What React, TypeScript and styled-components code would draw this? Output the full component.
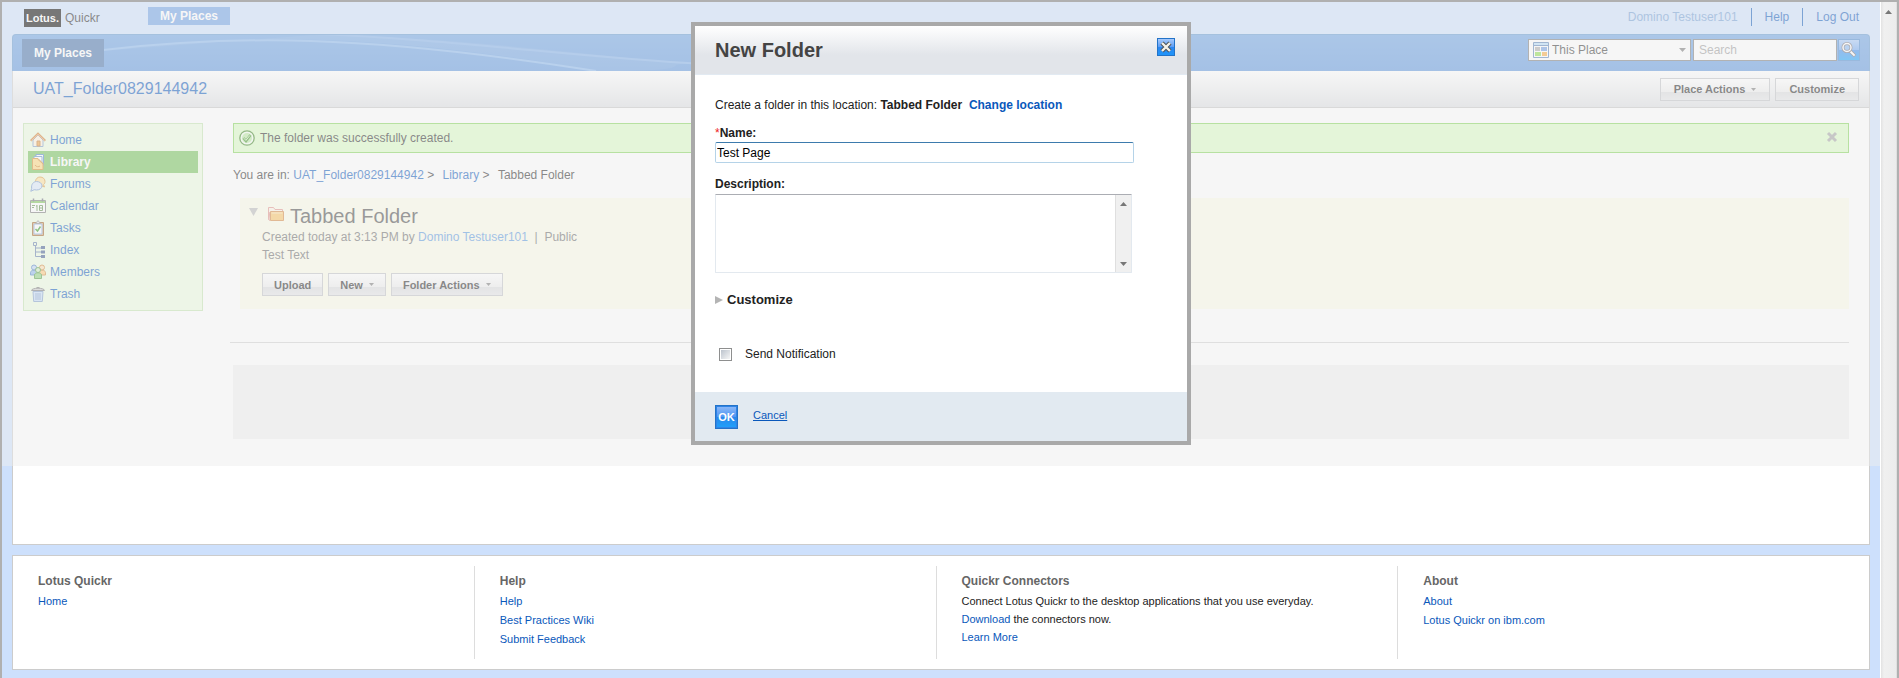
import React, { useState } from 'react';
import styled, { createGlobalStyle, css } from 'styled-components';

const GlobalStyle = createGlobalStyle`
  *, *::before, *::after { box-sizing: border-box; }
  body {
    margin: 0;
    background: #cde0fc;
    color: #222222;
    font: 12px/18px "Liberation Sans", Arial, Helvetica, sans-serif;
  }
  button, input, select, textarea { font: inherit; color: inherit; margin: 0; }
  a { color: #0a58bb; text-decoration: none; }
  h1, h2, h3, p, ul, ol { margin: 0; padding: 0; font-weight: normal; }
  ul, ol { list-style: none; }
`;

/* ---------- window frame ---------- */

const Frame = styled.div`
  display: flex;
  min-height: 100vh;
  border: 2px solid #b0b0b0;
  border-bottom: 0;
`;

const Page = styled.div`
  position: relative;
  flex: 1;
  min-width: 0;
  padding: 0 10px 8px;
`;

const ScrollTrack = styled.div`
  width: 17px;
  padding-top: 8px;
  display: flex;
  justify-content: center;
  align-items: flex-start;
  border-left: 1px solid #ffffff;
  border-right: 1px solid #e0e0e0;
  background: linear-gradient(to right, #e2e2e2, #f0f0f0 3px, #ececec);
`;

const Scrim = styled.div`
  position: absolute;
  top: 0;
  left: 0;
  right: 0;
  height: 464px;
  background: rgba(238, 238, 238, 0.5);
`;

/* ---------- banner ---------- */

const Banner = styled.header`
  display: flex;
  align-items: center;
  height: 32px;
  padding: 0 11px 2px 12px;
`;

const Logo = styled.div`
  display: flex;
  align-items: center;
  width: 124px;
  margin-top: 2px;
  color: #222222;
`;

const LogoMark = styled.span`
  width: 37px;
  margin-right: 4px;
  line-height: 18px;
  background: #000000;
  color: #ffffff;
  font-weight: bold;
  font-size: 11px;
  text-align: center;
`;

const PlacesLink = styled.a`
  padding: 0 12px;
  margin-bottom: 2px;
  background: #6a9ee4;
  color: #ffffff;
  font-weight: bold;
`;

const UserLinks = styled.ul`
  display: flex;
  margin-left: auto;
`;

const UserLink = styled.li<{ $muted?: boolean }>`
  padding: 0 13px;
  border-left: ${p => (p.$muted ? '0' : '1px solid #0a58bb')};
  &:last-child { padding-right: 0; }
  a { color: ${p => (p.$muted ? '#6c9bd3' : '#0a58bb')}; }
`;

/* ---------- place header ---------- */

const PlaceHeader = styled.div`
  display: grid;
  align-items: center;
  height: 37px;
  border: 1px solid #5c94cf;
  border-bottom: 0;
  border-radius: 4px 4px 0 0;
  background: linear-gradient(#69a0e2, #5b94dd);
  overflow: hidden;
  > * { grid-area: 1 / 1; }
`;

const Wave = styled.svg`
  width: 100%;
  height: 36px;
`;

const HeaderRow = styled.div`
  display: flex;
  align-items: flex-start;
  height: 28px;
  padding: 0 9px;
  z-index: 0;
`;

const Tab = styled.a`
  padding: 0 12px;
  line-height: 28px;
  background: #426fa9;
  color: #ffffff;
  font-weight: bold;
`;

const SearchBar = styled.form`
  display: flex;
  align-items: flex-start;
  margin-left: auto;
`;

const ScopeBox = styled.label`
  display: flex;
  align-items: center;
  width: 163px;
  height: 22px;
  margin-right: 2px;
  padding: 0 4px;
  border: 1px solid #777777;
  background: #ffffff;
  color: #333333;
  svg { flex: none; }
`;

const ScopeSelect = styled.select`
  flex: 1;
  height: 20px;
  padding: 0 3px;
  border: 0;
  background: transparent;
  appearance: none;
  outline: none;
`;

const SearchInput = styled.input`
  width: 144px;
  height: 22px;
  padding: 0 5px;
  border: 1px solid #777777;
  border-radius: 0;
  background: #ffffff;
  &::placeholder { color: #999999; opacity: 1; }
`;

const SearchButton = styled.button`
  display: flex;
  align-items: center;
  justify-content: center;
  width: 22px;
  height: 22px;
  margin-left: 1px;
  padding: 0;
  border: 1px solid #4484cc;
  background: linear-gradient(#a4c7f7, #6ea6f2 50%, #3c88ea 50%, #149ffa);
  svg { flex: none; }
`;

/* ---------- workspace ---------- */

const Panel = styled.section`
  border: 1px solid #cccccc;
  background: #ffffff;
`;

const Workspace = styled(Panel)`
  min-height: 474px;
  border-top: 0;
`;

const TitleBar = styled.div`
  display: flex;
  align-items: center;
  justify-content: space-between;
  height: 37px;
  padding: 0 10px 0 20px;
  border-bottom: 1px solid #c4c4c4;
  background: linear-gradient(#ffffff, #dcdee1);
`;

const PlaceName = styled.h1`
  font-size: 16px;
  line-height: 20px;
`;

const ButtonRow = styled.div`
  display: flex;
  gap: 5px;
`;

const ActionButton = styled.button<{ $wide?: boolean }>`
  display: flex;
  align-items: center;
  gap: 6px;
  height: 23px;
  padding: 0 ${p => (p.$wide ? 13 : 11)}px;
  border: 1px solid #bfc1c5;
  background: linear-gradient(#ffffff, #eeeeee 60%, #d8d9db 60%, #e4e5e7);
  color: #222222;
  font-weight: bold;
  font-size: 11px;
  line-height: 20px;
`;

const Columns = styled.div`
  display: flex;
  align-items: flex-start;
  padding: 15px 20px 0 10px;
`;

const SideNav = styled.nav`
  width: 180px;
  margin-right: 27px;
  padding: 5px 4px;
  border: 1px solid #c3e4ae;
  background: #ecfce0;
`;

const NavLink = styled.a<{ $active?: boolean }>`
  display: flex;
  align-items: center;
  gap: 4px;
  height: 22px;
  padding: 0 2px;
  ${p => p.$active && css`
    background: #70c054;
    color: #ffffff;
    font-weight: bold;
  `}
  svg { flex: none; }
`;

const Main = styled.main`
  flex: 1;
  min-width: 0;
`;

const Message = styled.div`
  display: flex;
  align-items: center;
  height: 30px;
  margin-left: 3px;
  padding: 0 10px 0 5px;
  gap: 5px;
  border: 1px solid #80d554;
  background: #dafcc4;
`;

const Dismiss = styled.button`
  display: flex;
  margin-left: auto;
  padding: 0 0 2px;
  border: 0;
  background: none;
`;

const Crumbs = styled.ol`
  display: flex;
  gap: 5px;
  margin: 13px 0 14px 3px;
`;

const FolderCard = styled.article`
  display: grid;
  grid-template-columns: 19px 22px 1fr;
  min-height: 111px;
  margin-left: 10px;
  padding: 8px 9px 13px;
  background: #fcfce8;
`;

const Twisty = styled.button`
  display: flex;
  align-items: flex-start;
  padding: 2px 0 0;
  border: 0;
  background: none;
`;

const FolderName = styled.h2`
  margin-bottom: 2px;
  color: #444444;
  font-size: 20px;
  line-height: 20px;
`;

const FolderInfo = styled.div`
  grid-column: 1 / -1;
  padding-left: 13px;
  color: #666666;
  a { color: #5594dd; }
`;

const FolderButtons = styled(ButtonRow)`
  padding-top: 9px;
`;

const Rule = styled.hr`
  margin: 33px 0 22px;
  border: 0;
  border-top: 1px solid #d0d0d0;
`;

const EmptyArea = styled.div`
  height: 74px;
  margin-left: 3px;
  background: #f0f0f0;
`;

/* ---------- footer ---------- */

const Footer = styled(Panel).attrs({ as: 'footer' })`
  display: grid;
  grid-template-columns: repeat(4, 1fr);
  margin-top: 10px;
  padding: 10px 9px 10px 0;
`;

const FooterColumn = styled.div`
  min-height: 93px;
  padding: 6px 25px;
  border-right: 1px solid #dddddd;
  font-size: 11px;
  &:last-child { border-right: 0; }
`;

const FooterHeading = styled.h3`
  margin-bottom: 2px;
  color: #666666;
  font-weight: bold;
  font-size: 12px;
`;

const FooterLine = styled.p<{ $tight?: boolean }>`
  line-height: ${p => (p.$tight ? '18px' : '19px')};
`;

/* ---------- dialog ---------- */

const DialogLayer = styled.div`
  position: absolute;
  top: 20px;
  left: 0;
  right: 0;
  display: flex;
  justify-content: center;
`;

const Dialog = styled.div`
  width: 500px;
  border: 4px solid #a9a9a9;
  background: #ffffff;
`;

const DialogHeader = styled.div`
  display: flex;
  justify-content: space-between;
  align-items: flex-start;
  height: 49px;
  padding: 12px 12px 0 20px;
  border-bottom: 1px solid #e2eaf2;
  background: linear-gradient(#ffffff, #e2e5ea 60%, #e2e5ea);
`;

const DialogTitle = styled.h2`
  color: #444444;
  font-weight: bold;
  font-size: 20px;
  line-height: 24px;
`;

const CloseButton = styled.button`
  display: flex;
  align-items: center;
  justify-content: center;
  width: 18px;
  height: 18px;
  padding: 0;
  border: 1px solid #2373c8;
  background: linear-gradient(#a7c9fb, #5b9cf5 50%, #2d86ee 50%, #1f95fa);
`;

const DialogBody = styled.form`
  height: 317px;
  padding: 21px 44px 0 20px;
`;

const Location = styled.p`
  margin-bottom: 10px;
`;

const FieldLabel = styled.label`
  display: block;
  font-weight: bold;
`;

const Required = styled.span`
  color: #ee2222;
  font-weight: normal;
`;

const NameInput = styled.input`
  display: block;
  width: 419px;
  height: 21px;
  margin-bottom: 12px;
  padding: 0 1px;
  border: 1px solid #b5d3e8;
  border-top-color: #3d7bad;
  border-radius: 2px;
  color: #000000;
  outline: none;
`;

const TextBox = styled.div`
  display: flex;
  width: 417px;
  height: 79px;
  margin-top: 1px;
  border: 1px solid #e3e9ef;
  border-top-color: #abadb3;
  border-radius: 1px;
`;

const TextArea = styled.textarea`
  flex: 1;
  padding: 2px;
  border: 0;
  outline: none;
  resize: none;
`;

const TextScroll = styled.div`
  display: flex;
  flex-direction: column;
  align-items: center;
  justify-content: space-between;
  width: 16px;
  padding: 7px 0 6px;
  border-left: 1px solid #dfdfdf;
  background: #f0f0f0;
`;

const Disclosure = styled.button`
  display: flex;
  align-items: center;
  gap: 4px;
  margin: 18px 0 36px;
  padding: 0;
  border: 0;
  background: none;
  font-weight: bold;
  font-size: 13px;
  line-height: 18px;
`;

const CheckLabel = styled.label`
  display: flex;
  align-items: center;
  gap: 13px;
  padding-left: 4px;
`;

const CheckBox = styled.input`
  width: 13px;
  height: 13px;
  padding: 1px;
  border: 1px solid #8e8f8f;
  background: linear-gradient(135deg, #bcc3cd, #f6f6f6) content-box;
  appearance: none;
`;

const DialogFooter = styled.div`
  display: flex;
  align-items: center;
  gap: 15px;
  height: 49px;
  padding: 0 20px;
  background: #e2eaf1;
  font-size: 11px;
  a { text-decoration: underline; padding-bottom: 3px; }
`;

const OkButton = styled.button`
  width: 23px;
  height: 24px;
  padding: 0;
  border: 1px solid #2373c8;
  background: linear-gradient(#8fbaf8, #4f96f2 50%, #2a86ea 50%, #1ea2fb);
  box-shadow: inset 0 0 0 1px #2f84e6;
  color: #ffffff;
  font-weight: bold;
`;

/* ---------- drawings ---------- */

const Arrow = ({ w = 5, h = 3, dir = 'down', color = '#777' }: { w?: number; h?: number; dir?: string; color?: string }) => (
  <svg width={w} height={h} viewBox="0 0 10 10" preserveAspectRatio="none" aria-hidden="true">
    <path fill={color} d={dir === 'down' ? 'M0 0h10L5 10z' : dir === 'up' ? 'M0 10h10L5 0z' : 'M0 0v10L10 5z'} />
  </svg>
);

const Icon = ({ children }: { children: React.ReactNode }) => (
  <svg width="16" height="16" viewBox="0 0 16 16" fill="none" aria-hidden="true">{children}</svg>
);

const icons: Record<string, React.ReactNode> = {
  Home: <Icon><path d="M3 8v6.500h10V8L8 3z" fill="#fff3dc" stroke="#7d9cc4" /><path d="M7 9h3v5H7z" fill="#f0a03c" stroke="#c47a2c" /><path d="M.7 8.700 8 1.600l7.300 7.100" stroke="#d07828" strokeWidth="2" /><path d="M1.500 8.500 8 2.300l6.500 6.200" stroke="#ffc98c" strokeWidth=".7" /></Icon>,
  Library: <Icon><path d="M6 .5h7.500v11H6z" fill="#fff" stroke="#4c82c4" /><path d="M4 2.500h8v11H4z" fill="#fff" stroke="#5c8cc8" /><path d="M2.500 4.500h5.500l5 5v6H2.500z" fill="#ffd67a" stroke="#d28a28" /><path d="M7.500 5l5.500 5M5 11c1 2 4 2 5 1" stroke="#d28a28" /></Icon>,
  Forums: <Icon><path d="M10 1c3 0 5 2 5 4.500 0 1.500-.6 2.500-1.500 3.200l1 2.300-3-1.200C8 10 5.500 8 5.500 5.500S7.500 1 10 1z" fill="#ffe09a" stroke="#dc9a3c" /><path d="M6.500 5.500c3 0 5.500 1.800 5.500 4.300s-2.500 4.200-5.500 4.200c-.8 0-1.600-.1-2.300-.3L.8 15.300l.9-3C.9 8.500 3.500 5.500 6.500 5.500z" fill="#dbe8fa" stroke="#6f95cc" /></Icon>,
  Calendar: <Icon><path d="M.5 2.500h15v12H.5z" fill="#fff" stroke="#777" /><path d="M1 3h14v2H1z" fill="#7cc455" /><path d="M3.500.5v3M12.500.5v3" stroke="#667" strokeWidth="1.500" /><path d="M2 7.500h3M2 9.500h2M7 7v6M6 8h1M9.500 7.500h3v5h-3zM9.500 10h3" stroke="#5a8a44" /></Icon>,
  Tasks: <Icon><path d="M2.500 2.500h11v13h-11z" fill="#e0a868" stroke="#9c5e20" /><path d="M4 4h8v10H4z" fill="#fff" stroke="#7aa2dc" /><path d="M5.500 3.500 8 .6l2.500 2.900z" fill="#ddd" stroke="#888" /><path d="m5.500 9 2 2 3-4.500" stroke="#2f9a1c" strokeWidth="1.500" /></Icon>,
  Index: <Icon><path d="M3.500.5h3v3h-3zM5.500 4v10.500H12M5.500 10H12M5.500 6h6" stroke="#5f7aa8" /><path d="M11 4h4v3h-4zM11 8.500h4v3h-4zM11 13h4v3h-4z" fill="#3d568c" /></Icon>,
  Members: <Icon><circle cx="4" cy="3.500" r="2.500" fill="#bcd6f6" stroke="#4c80c4" /><path d="M.5 11V8.500c0-3 7-3 7 0V11z" fill="#8ab4ea" stroke="#4c80c4" /><circle cx="12" cy="3.500" r="2.500" fill="#ffe0b0" stroke="#d08a3c" /><path d="M8.500 11V8.500c0-3 7-3 7 0V11z" fill="#ffc878" stroke="#d08a3c" /><circle cx="8" cy="6" r="2.500" fill="#d4f0c4" stroke="#4c9a3c" /><path d="M4.500 14.500V11c0-3 7-3 7 0v3.500z" fill="#8cd07c" stroke="#4c9a3c" /></Icon>,
  Trash: <Icon><path d="M3 5.500h10l-.7 10H3.700z" fill="#c4dcf8" stroke="#7c9cc8" /><path d="M6 7v7M8 7v7M10 7v7" stroke="#7c9cc8" /><path d="M1.500 4.500c0-3 13-3 13 0z" fill="#ccc" stroke="#777" /><path d="M6.500 1.500h3" stroke="#777" /></Icon>,
};

const SuccessIcon = () => (
  <Icon><circle cx="8" cy="8" r="7.200" fill="#f4fff0" stroke="#3c8420" strokeWidth="1.300" /><circle cx="8" cy="8" r="5" fill="#b8e8a0" /><path d="m4.500 8 2.500 3 4.500-6" stroke="#3c9020" strokeWidth="2.600" /><path d="m4.900 8.200 2 2.200 4-5" stroke="#d8f8c8" strokeWidth="1" /></Icon>
);

const FolderIcon = () => (
  <Icon><path d="M.5 13.500v-12h5l1.500 2h7.500v3" fill="#fff4e4" stroke="#e09088" /><path d="M.5 13.500l1.500 1V6z" fill="#fff4e4" stroke="#e09088" /><path d="M2.500 5.500h13v9h-13z" fill="#fbc260" stroke="#d4843c" /><path d="M3.500 7h11" stroke="#ffe4b0" /></Icon>
);

const PlaceIcon = () => (
  <Icon><path d="M.5.5h15v15H.5z" fill="#fff" stroke="#557fb4" /><path d="M1 1h14v2H1z" fill="#b4dcfa" /><path d="M1 3.500h14" stroke="#557fb4" /><path d="M2 5h5v4H2z" fill="#aaa" /><path d="M8 5h6v4H8z" fill="#6c9be0" /><path d="M2 10h6v4H2z" fill="#8cdc4c" /><path d="M9 10h5v4H9z" fill="#f8a83c" /></Icon>
);

const SearchIcon = () => (
  <Icon><path d="m9 9 5 5" stroke="#6f6a70" strokeWidth="3.600" /><path d="m9 9 4.600 4.600" stroke="#fff" strokeWidth="2" /><circle cx="6" cy="5.500" r="4" fill="#86b8f4" stroke="#6f6a70" strokeWidth="3" /><circle cx="6" cy="5.500" r="4" stroke="#fff" strokeWidth="1.500" /></Icon>
);

const CloseIcon = () => (
  <svg width="12" height="12" viewBox="0 0 12 12" aria-hidden="true">
    <path d="m2 2 8 8M10 2l-8 8" stroke="#4c5258" strokeWidth="4.400" />
    <path d="m2 2 8 8M10 2l-8 8" stroke="#f6f2ea" strokeWidth="2.400" />
  </svg>
);

/* ---------- page ---------- */

const navItems = ['Home', 'Library', 'Forums', 'Calendar', 'Tasks', 'Index', 'Members', 'Trash'];

export default function App() {
  const [name, setName] = useState('Test Page');
  return (
    <>
      <GlobalStyle />
      <Frame>
        <Page>
          <Banner>
            <Logo><LogoMark>Lotus.</LogoMark>Quickr</Logo>
            <PlacesLink href="#places">My Places</PlacesLink>
            <UserLinks>
              <UserLink $muted><a href="#user">Domino Testuser101</a></UserLink>
              <UserLink><a href="#help">Help</a></UserLink>
              <UserLink><a href="#logout">Log Out</a></UserLink>
            </UserLinks>
          </Banner>

          <PlaceHeader>
            <Wave viewBox="0 0 1856 36" preserveAspectRatio="none" fill="none" aria-hidden="true">
              <path d="M90 16C220 -1 360 -4 583 36C700 36 640 28 680 29C560 18 440 2 300 0" fill="#ffffff" fillOpacity=".06" />
              <path d="M90 15C220 0 350 -1 583 36" stroke="#85b4ec" strokeWidth="2" />
              <path d="M300 -1C440 4 560 22 690 29" stroke="#7dade8" strokeWidth="2" />
            </Wave>
            <HeaderRow>
              <Tab href="#myplaces">My Places</Tab>
              <SearchBar>
                <ScopeBox>
                  <PlaceIcon />
                  <ScopeSelect aria-label="Search scope"><option>This Place</option></ScopeSelect>
                  <Arrow w={7} h={4} />
                </ScopeBox>
                <SearchInput type="text" placeholder="Search" aria-label="Search" />
                <SearchButton type="button" aria-label="Run search"><SearchIcon /></SearchButton>
              </SearchBar>
            </HeaderRow>
          </PlaceHeader>

          <Workspace>
            <TitleBar>
              <PlaceName><a href="#place">UAT_Folder0829144942</a></PlaceName>
              <ButtonRow>
                <ActionButton type="button" $wide>Place Actions <Arrow /></ActionButton>
                <ActionButton type="button" $wide>Customize</ActionButton>
              </ButtonRow>
            </TitleBar>
            <Columns>
              <SideNav>
                {navItems.map(item => (
                  <NavLink key={item} href={`#${item.toLowerCase()}`} $active={item === 'Library'}>
                    {icons[item]}{item}
                  </NavLink>
                ))}
              </SideNav>
              <Main>
                <Message role="status">
                  <SuccessIcon />
                  The folder was successfully created.
                  <Dismiss type="button" aria-label="Dismiss message">
                    <svg width="12" height="12" viewBox="0 0 12 12" aria-hidden="true"><path d="m2 2 8 8M10 2l-8 8" stroke="#a0a0a0" strokeWidth="3" /></svg>
                  </Dismiss>
                </Message>
                <Crumbs>
                  <li>You are in: <a href="#place">UAT_Folder0829144942</a> &gt;</li>
                  <li>&nbsp;<a href="#library">Library</a> &gt;</li>
                  <li>&nbsp;Tabbed Folder</li>
                </Crumbs>
                <FolderCard>
                  <Twisty type="button" aria-label="Collapse details"><Arrow w={9} h={8} color="#b8b8b8" /></Twisty>
                  <FolderIcon />
                  <FolderName>Tabbed Folder</FolderName>
                  <FolderInfo>
                    <p>Created today at 3:13 PM by <a href="#user">Domino Testuser101</a>&nbsp; |&nbsp; Public</p>
                    <p>Test Text</p>
                    <FolderButtons>
                      <ActionButton type="button">Upload</ActionButton>
                      <ActionButton type="button">New <Arrow /></ActionButton>
                      <ActionButton type="button">Folder Actions <Arrow /></ActionButton>
                    </FolderButtons>
                  </FolderInfo>
                </FolderCard>
                <Rule />
                <EmptyArea />
              </Main>
            </Columns>
          </Workspace>

          <Footer>
            <FooterColumn>
              <FooterHeading>Lotus Quickr</FooterHeading>
              <FooterLine><a href="#home">Home</a></FooterLine>
            </FooterColumn>
            <FooterColumn>
              <FooterHeading>Help</FooterHeading>
              <FooterLine><a href="#help">Help</a></FooterLine>
              <FooterLine><a href="#wiki">Best Practices Wiki</a></FooterLine>
              <FooterLine><a href="#feedback">Submit Feedback</a></FooterLine>
            </FooterColumn>
            <FooterColumn>
              <FooterHeading>Quickr Connectors</FooterHeading>
              <FooterLine $tight>Connect Lotus Quickr to the desktop applications that you use everyday.</FooterLine>
              <FooterLine $tight><a href="#download">Download</a> the connectors now.</FooterLine>
              <FooterLine $tight><a href="#learn">Learn More</a></FooterLine>
            </FooterColumn>
            <FooterColumn>
              <FooterHeading>About</FooterHeading>
              <FooterLine><a href="#about">About</a></FooterLine>
              <FooterLine><a href="#ibm">Lotus Quickr on ibm.com</a></FooterLine>
            </FooterColumn>
          </Footer>

          <Scrim />
          <DialogLayer>
            <Dialog role="dialog" aria-labelledby="dialog-title">
              <DialogHeader>
                <DialogTitle id="dialog-title">New Folder</DialogTitle>
                <CloseButton type="button" aria-label="Close"><CloseIcon /></CloseButton>
              </DialogHeader>
              <DialogBody>
                <Location>Create a folder in this location: <b>Tabbed Folder</b>&nbsp; <a href="#location"><b>Change location</b></a></Location>
                <FieldLabel htmlFor="folder-name"><Required>*</Required>Name:</FieldLabel>
                <NameInput id="folder-name" type="text" value={name} onChange={e => setName(e.target.value)} />
                <FieldLabel htmlFor="folder-description">Description:</FieldLabel>
                <TextBox>
                  <TextArea id="folder-description" />
                  <TextScroll aria-hidden="true"><Arrow w={7} h={4} dir="up" /><Arrow w={7} h={4} /></TextScroll>
                </TextBox>
                <Disclosure type="button"><Arrow w={8} h={8} dir="right" color="#b4b4b4" />Customize</Disclosure>
                <CheckLabel><CheckBox type="checkbox" />Send Notification</CheckLabel>
              </DialogBody>
              <DialogFooter>
                <OkButton type="button">OK</OkButton>
                <a href="#cancel">Cancel</a>
              </DialogFooter>
            </Dialog>
          </DialogLayer>
        </Page>
        <ScrollTrack aria-hidden="true"><Arrow w={7} h={4} dir="up" /></ScrollTrack>
      </Frame>
    </>
  );
}
